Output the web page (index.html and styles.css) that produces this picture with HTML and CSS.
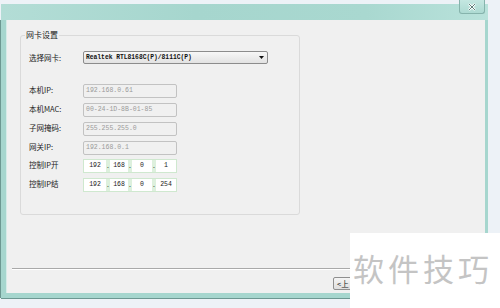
FILE: index.html
```html
<!DOCTYPE html>
<html>
<head>
<meta charset="utf-8">
<link rel="stylesheet" href="styles.css">
</head>
<body>
<div class="screen">
  <div class="window">
    <div class="titlebar">
      <div class="close">
        <svg width="10" height="8" viewBox="0 0 10 8"><path d="M2 1 L8 7 M8 1 L2 7" stroke="#ffffff" stroke-width="2.4"/><path d="M2 1 L8 7 M8 1 L2 7" stroke="#5f7f7a" stroke-width="1"/></svg>
      </div>
    </div>
    <div class="client">
      <div class="group">
        <div class="group-title">网卡设置</div>
        <div class="row select-row">
          <span class="label">选择网卡:</span>
          <div class="select">
            <span class="select-text">Realtek RTL8168C(P)/8111C(P)</span>
            <svg class="arrow" width="5" height="3" viewBox="0 0 5 3"><path d="M0 0 H5 L2.5 3 Z" fill="#111"/></svg>
          </div>
        </div>
        <div class="fields">
          <div class="row"><span class="label">本机IP:</span><div class="field">192.168.0.61</div></div>
          <div class="row"><span class="label">本机MAC:</span><div class="field">00-24-1D-8B-01-85</div></div>
          <div class="row"><span class="label">子网掩码:</span><div class="field">255.255.255.0</div></div>
          <div class="row"><span class="label">网关IP:</span><div class="field">192.168.0.1</div></div>
          <div class="row row-ip"><span class="label">控制IP开</span>
            <div class="ip"><span class="seg s1">192</span><span class="dot">.</span><span class="seg s2">168</span><span class="dot">.</span><span class="seg s3">0</span><span class="dot">.</span><span class="seg s4">1</span></div>
          </div>
          <div class="row row-ip"><span class="label">控制IP结</span>
            <div class="ip"><span class="seg s1">192</span><span class="dot">.</span><span class="seg s2">168</span><span class="dot">.</span><span class="seg s3">0</span><span class="dot">.</span><span class="seg s4">254</span></div>
          </div>
        </div>
      </div>
      <div class="sep"></div>
      <div class="footer"><span class="btn">&lt;上</span></div>
    </div>
  </div>
  <div class="watermark">软件技巧</div>
</div>
</body>
</html>
```
FILE: styles.css
```css
html, body {
  margin: 0;
  padding: 0;
}
body {
  background: #edf2f7;
  font-family: "Noto Sans CJK SC", "Noto Sans", sans-serif;
  font-size: 8px;
}
.screen {
  position: relative;
  width: 500px;
  height: 308px;
  overflow: hidden;
  background: #edf2f7;
}
.window {
  margin: 4px 0 0 1px;
  width: 487px;
}
.titlebar {
  height: 16px;
  background: linear-gradient(90deg, #b3ddd6 0%, #a6d6ce 40%, #a9d8d0 75%, #b9e2db 100%);
  display: flex;
  justify-content: flex-end;
  align-items: flex-start;
}
.close {
  margin-top: -4px;
  margin-right: 3px;
  width: 26px;
  height: 14px;
  box-sizing: border-box;
  border: 1px solid #86b3ac;
  border-top: none;
  border-radius: 0 0 3px 3px;
  background: linear-gradient(#c4e7e1, #addad2);
  display: flex;
  align-items: center;
  justify-content: center;
}
.client {
  background: #f0f0f0;
  border-left: 5px solid #a6d6ce;
  border-right: 3px solid #a6d6ce;
  border-bottom: 5px solid #a6d6ce;
  height: 273px;
  display: flex;
  flex-direction: column;
  align-items: flex-start;
  box-shadow: inset 1px 0 0 #d6ece8, -1px 0 0 #6d9892, 0 1px 0 #6d9892;
}
.group {
  margin: 15px 0 0 14px;
  width: 280px;
  height: 180px;
  box-sizing: border-box;
  border: 1px solid #dadada;
  border-radius: 3px;
  padding: 0 8px;
  display: flex;
  flex-direction: column;
}
.group-title {
  margin: -7px 0 0 -4px;
  padding: 0 1px;
  background: #f0f0f0;
  align-self: flex-start;
  font-size: 8px;
  line-height: 12px;
  color: #222;
}
.row {
  display: grid;
  grid-template-columns: 54px 94px;
  align-items: start;
}
.label {
  font-size: 7.5px;
  line-height: 10px;
  color: #222;
  white-space: nowrap;
  margin-top: 1px;
}
.select-row {
  margin-top: 10px;
  grid-template-columns: 54px 185px;
  align-items: center;
}
.select-row .label {
  margin-top: 0;
}
.select {
  height: 13px;
  box-sizing: border-box;
  border: 1px solid #8c8c8c;
  border-radius: 2px;
  background: linear-gradient(#f7f7f7, #e2e2e2);
  display: flex;
  align-items: center;
  justify-content: space-between;
  padding: 0 3px 0 2px;
}
.select-text {
  font-family: "Liberation Mono", monospace;
  font-weight: bold;
  font-size: 6.3px;
  color: #111;
  white-space: nowrap;
}
.fields {
  margin-top: 20px;
  display: flex;
  flex-direction: column;
  gap: 5px;
}
.field {
  height: 14px;
  box-sizing: border-box;
  border: 1px solid #c2c2c2;
  border-radius: 2px;
  background: #f0f0f0;
  font-family: "Liberation Mono", monospace;
  font-size: 6.5px;
  line-height: 12px;
  color: #9a9a9a;
  padding-left: 2px;
}
.row-ip {
  height: 14px;
}
.fields .row-ip:nth-child(5) {
  margin-top: -1px;
}
.ip {
  height: 14px;
  box-sizing: border-box;
  border: 1px solid #cfe8cf;
  background: #ddf0dd;
  display: flex;
}
.seg {
  background: #ffffff;
  font-family: "Liberation Mono", monospace;
  font-size: 6.5px;
  line-height: 12px;
  color: #222;
  text-align: center;
}
.s1 { width: 22px; }
.s2 { width: 18px; }
.s3 { width: 20px; }
.s4 { width: 20px; }
.dot {
  width: 4px;
  font-family: "Liberation Mono", monospace;
  font-size: 6.5px;
  line-height: 14px;
  color: #333;
  text-align: center;
}
.sep {
  margin: 53px 0 0 6px;
  width: 470px;
  height: 1px;
  background: #a9a9a9;
  border-bottom: 1px solid #ffffff;
}
.footer {
  margin-top: 7px;
  padding-left: 327px;
  display: flex;
}
.btn {
  display: block;
  height: 13px;
  width: 60px;
  box-sizing: border-box;
  border: 1px solid #8f8f8f;
  border-radius: 2px;
  background: linear-gradient(#f5f5f5, #dedede);
  font-size: 7.5px;
  line-height: 11px;
  padding-left: 3px;
  color: #222;
}
.watermark {
  position: absolute;
  left: 350px;
  top: 233px;
  width: 150px;
  height: 75px;
  box-sizing: border-box;
  background: #ffffff;
  padding: 19px 0 0 3px;
  font-family: "Noto Sans CJK SC", sans-serif;
  font-size: 31px;
  line-height: 31px;
  letter-spacing: 4px;
  color: #c4c4c4;
  white-space: nowrap;
}
```
